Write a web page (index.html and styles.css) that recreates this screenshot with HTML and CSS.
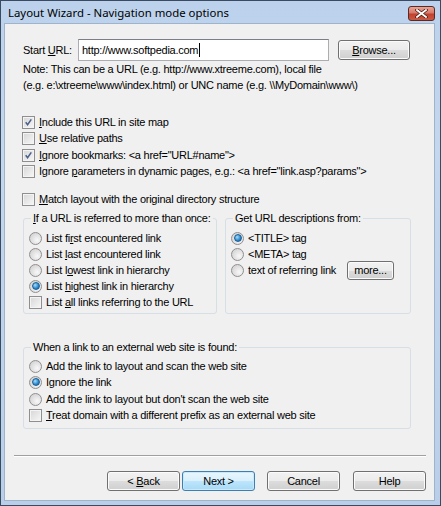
FILE: index.html
```html
<!DOCTYPE html>
<html lang="en">
<head>
    <meta charset="UTF-8">
    <title>Layout Wizard - Navigation mode options</title>
    <link rel="stylesheet" href="styles.css">
</head>
<body>
    <div class="window">
        <div class="titlebar">
            <span class="title">Layout Wizard - Navigation mode options</span>
            <span class="close">
                <svg width="13" height="9" viewBox="0 0 13 9">
                    <path d="M2 1 L11 8 M11 1 L2 8" stroke="#4a1a14" stroke-width="3.4" stroke-linecap="square"/>
                    <path d="M2 1 L11 8 M11 1 L2 8" stroke="#ffffff" stroke-width="1.8" stroke-linecap="square"/>
                </svg>
            </span>
        </div>
        <div class="client">
            <div class="content">
                <div class="url-row">
                    <label class="url-label">Start <u>U</u>RL:</label>
                    <div class="textbox"><span>http://www.softpedia.com</span><span class="caret"></span></div>
                    <div class="btn browse"><span><u>B</u>rowse...</span></div>
                </div>
                <p class="note">Note: This can be a URL (e.g. http://www.xtreeme.com), local file<br>(e.g. e:\xtreeme\www\index.html) or UNC name (e.g. \\MyDomain\www\)</p>

                <div class="opts">
                    <div class="opt"><span class="cb on"><svg viewBox="0 0 13 13"><path d="M3.2 6.2 L5.4 9 L9.8 2.8" /></svg></span><span><u>I</u>nclude this URL in site map</span></div>
                    <div class="opt"><span class="cb"></span><span><u>U</u>se relative paths</span></div>
                    <div class="opt"><span class="cb on"><svg viewBox="0 0 13 13"><path d="M3.2 6.2 L5.4 9 L9.8 2.8" /></svg></span><span><u>I</u>gnore bookmarks: &lt;a href="URL#name"&gt;</span></div>
                    <div class="opt"><span class="cb"></span><span>Ignore <u>p</u>arameters in dynamic pages, e.g.: &lt;a href="link.asp?params"&gt;</span></div>
                </div>

                <div class="opt match"><span class="cb"></span><span><u>M</u>atch layout with the original directory structure</span></div>

                <div class="groups">
                    <fieldset class="group refer">
                        <legend><u>I</u>f a URL is referred to more than once:</legend>
                        <div class="opt"><span class="rb"></span><span>List fi<u>r</u>st encountered link</span></div>
                        <div class="opt"><span class="rb"></span><span>List <u>l</u>ast encountered link</span></div>
                        <div class="opt"><span class="rb"></span><span>List l<u>o</u>west link in hierarchy</span></div>
                        <div class="opt"><span class="rb on"></span><span>List <u>h</u>ighest link in hierarchy</span></div>
                        <div class="opt"><span class="cb"></span><span>List <u>a</u>ll links referring to the URL</span></div>
                    </fieldset>
                    <fieldset class="group descr">
                        <legend>Get URL descriptions from:</legend>
                        <div class="opt"><span class="rb on"></span><span>&lt;TITLE&gt; tag</span></div>
                        <div class="opt"><span class="rb"></span><span>&lt;META&gt; tag</span></div>
                        <div class="opt more-row"><span class="rb"></span><span>text of referring link</span><div class="btn more"><span>more...</span></div></div>
                    </fieldset>
                </div>

                <fieldset class="group external">
                    <legend>When a link to an external web site is found:</legend>
                    <div class="opt"><span class="rb"></span><span>Add the link to layout and scan the web site</span></div>
                    <div class="opt"><span class="rb on"></span><span>Ignore the link</span></div>
                    <div class="opt"><span class="rb"></span><span>Add the link to layout but don't scan the web site</span></div>
                    <div class="opt"><span class="cb"></span><span><u>T</u>reat domain with a different prefix as an external web site</span></div>
                </fieldset>
            </div>

            <div class="separator"></div>
            <div class="buttons">
                <div class="btn"><span>&lt; <u>B</u>ack</span></div>
                <div class="btn default"><span>Next &gt;</span></div>
                <div class="btn cancel"><span>Cancel</span></div>
                <div class="btn help"><span>Help</span></div>
            </div>
        </div>
    </div>
</body>
</html>
```
FILE: styles.css
```css
html, body {
    margin: 0;
    padding: 0;
}
body {
    font-family: "Liberation Sans", Arial, sans-serif;
    font-size: 11px;
    letter-spacing: -0.25px;
    color: #000;
    background: #fff;
}
.window {
    width: 441px;
    height: 506px;
    box-sizing: border-box;
    border: 1px solid #3a4a60;
    padding: 0 5px 4px 3px;
    background: linear-gradient(#bcd2ec, #c3d7ee 30%, #b9cfe9);
    display: flex;
    flex-direction: column;
}
.titlebar {
    height: 22px;
    display: flex;
    align-items: center;
    justify-content: space-between;
    padding-left: 4px;
}
.title {
    font-family: "Noto Sans", "Open Sans", sans-serif;
    font-size: 11.4px;
    letter-spacing: 0;
    color: #000;
    margin-top: 1px;
}
.close {
    width: 27px;
    height: 15px;
    box-sizing: border-box;
    border: 1px solid #5a2a24;
    border-radius: 3px;
    background: linear-gradient(#e8a597, #d77a6a 45%, #c2412f 55%, #c95a44);
    display: flex;
    align-items: center;
    justify-content: center;
    margin-top: 2px;
}
.client {
    flex: 1;
    background: #f0f0f0;
    border: 1px solid #9fb3cb;
    display: flex;
    flex-direction: column;
}
.content {
    padding: 15px 0 0 18px;
}
.url-row {
    display: flex;
    align-items: center;
    height: 22px;
}
.url-label {
    width: 55px;
}
.textbox {
    width: 251px;
    height: 22px;
    box-sizing: border-box;
    border: 1px solid #abadb3;
    border-top-color: #7a7e87;
    background: #fff;
    padding: 0 3px;
    display: flex;
    align-items: center;
}
.caret {
    width: 1px;
    height: 14px;
    background: #000;
    margin-left: 1px;
}
.btn {
    box-sizing: border-box;
    height: 20px;
    border: 1px solid #707070;
    border-radius: 3px;
    background: linear-gradient(#f2f2f2, #ebebeb 50%, #dddddd 50%, #cfcfcf);
    box-shadow: inset 0 0 0 1px #fbfbfb;
    display: flex;
    align-items: center;
    justify-content: center;
    white-space: pre;
}
.browse {
    width: 72px;
    margin-left: 9px;
}
.note {
    margin: 0;
    line-height: 16px;
}
.opts {
    margin: 21px 0 0 -1px;
}
.opt {
    display: flex;
    align-items: center;
    height: 16px;
    white-space: nowrap;
}
.opts .opt:nth-child(3) {
    margin-top: 1px;
}
.cb {
    width: 13px;
    height: 13px;
    box-sizing: border-box;
    flex: none;
    border: 1px solid #8f8f8f;
    background: linear-gradient(135deg, #d6d6d6, #f7f7f7);
    box-shadow: inset 0 0 0 1px #f4f4f4;
    margin-right: 4px;
}
.cb svg {
    display: block;
    width: 11px;
    height: 11px;
}
.cb svg path {
    fill: none;
    stroke: #4a5f8a;
    stroke-width: 1.8;
}
.rb {
    width: 13px;
    height: 13px;
    box-sizing: border-box;
    flex: none;
    border: 1px solid #8f8f8f;
    border-radius: 50%;
    background: radial-gradient(circle at 65% 65%, #f8f8f8, #d8d8d8 70%);
    margin-right: 4px;
    display: flex;
    align-items: center;
    justify-content: center;
}
.rb.on::after {
    content: "";
    width: 6px;
    height: 6px;
    border-radius: 50%;
    border: 1px solid #1a5d95;
    background: radial-gradient(circle at 35% 35%, #a9dcf8, #2e8ed3 55%, #155a9c);
}
.match {
    margin: 12px 0 0 -1px;
}
.groups {
    display: flex;
    margin-top: 3px;
}
.group {
    margin: 0;
    min-inline-size: 0;
    border: 1px solid #d5dfe5;
    border-radius: 3px;
    box-sizing: border-box;
    padding: 4px 0 0 5px;
}
.group legend {
    padding: 0 2px;
    margin-left: 2px;
    line-height: 16px;
    white-space: nowrap;
}
.refer {
    width: 194px;
    height: 104px;
}
.descr {
    width: 186px;
    height: 104px;
    margin-left: 8px;
}
.more-row .btn.more {
    width: 47px;
    height: 19px;
    margin-left: auto;
    margin-right: 16px;
}
.external {
    width: 388px;
    height: 90px;
    margin-top: 25px;
    padding-top: 3px;
}
.external .opt:nth-child(4) {
    margin-top: 1px;
}
.separator {
    height: 0;
    margin: 26px 8px 0 9px;
    border-top: 1px solid #a0a0a0;
    border-bottom: 1px solid #fff;
}
.buttons {
    display: flex;
    justify-content: flex-end;
    margin: 14px 8px 0 0;
}
.buttons .btn {
    width: 73px;
}
.buttons .btn.default {
    margin-left: 2px;
    border-color: #3c7fb1;
    background: linear-gradient(#eaf6fd, #d9f0fc 50%, #bee6fd 50%, #a7d9f5);
    box-shadow: inset 0 0 0 1px #c7e9fb;
}
.buttons .btn.cancel {
    margin-left: 12px;
}
.buttons .btn.help {
    margin-left: 13px;
}
```
